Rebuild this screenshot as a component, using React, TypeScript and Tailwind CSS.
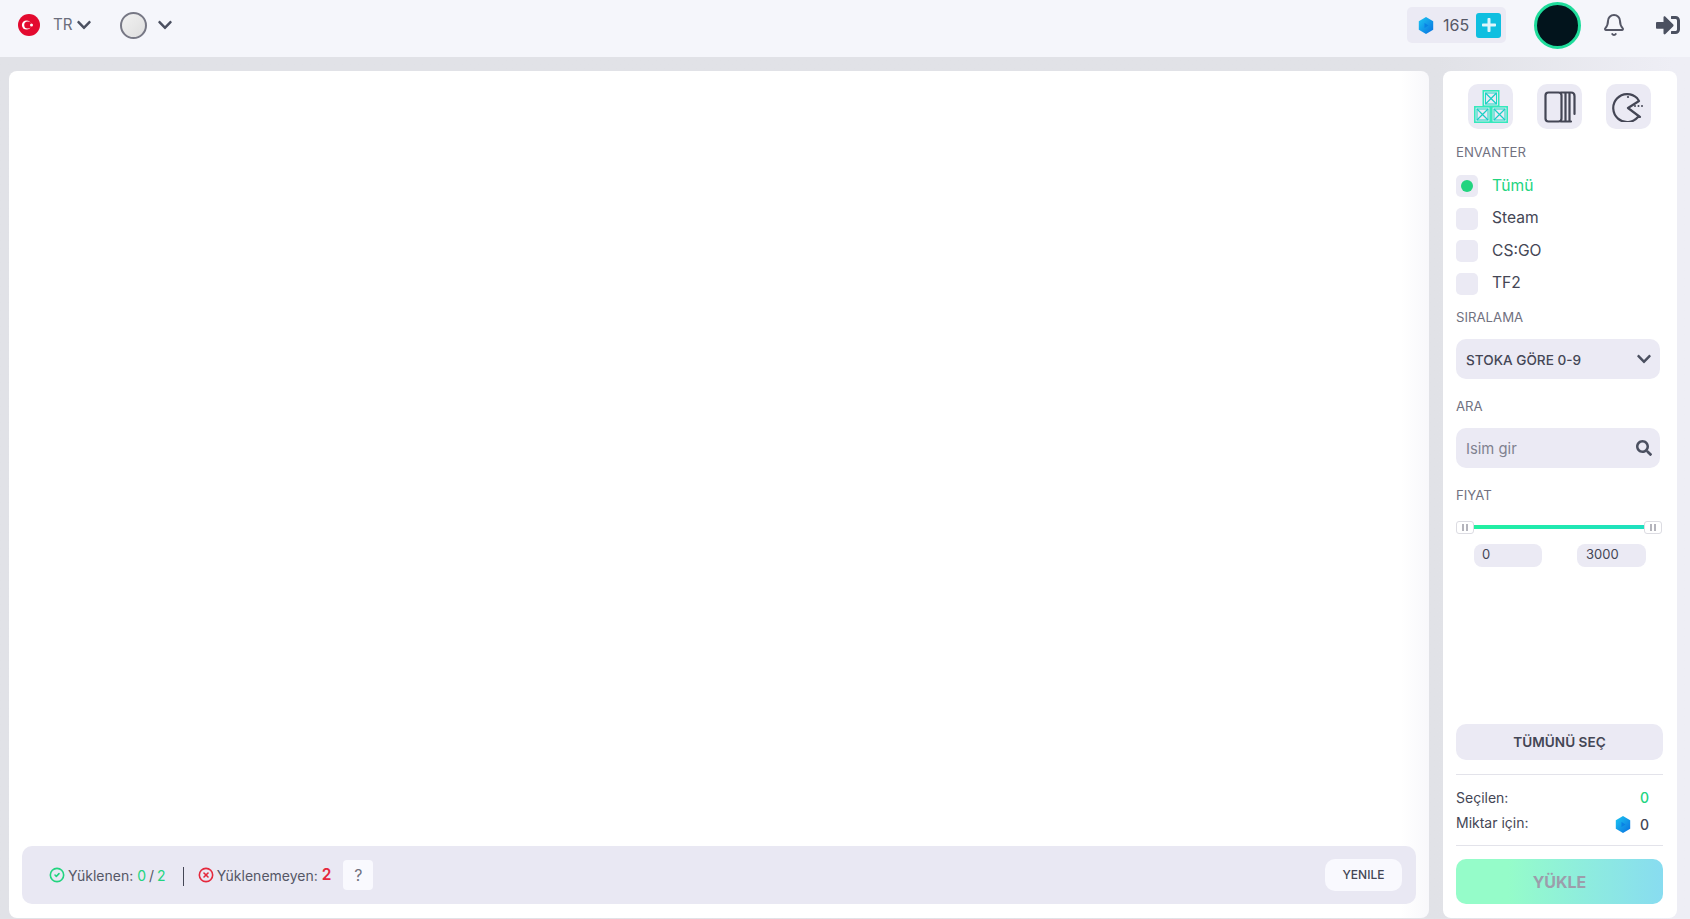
import { Bell, CheckCircle2, XCircle } from "lucide-react";
import { FaChevronDown, FaSignInAlt, FaPlus, FaSearch } from "react-icons/fa";

function Hex({ id }: { id: string }) {
  return (
    <svg width="16" height="17" viewBox="0 0 16 17" className="shrink-0">
      <defs>
        <linearGradient id={id} x1="0" y1="0" x2="1" y2="1">
          <stop offset="0" stopColor="#1cc8f2" />
          <stop offset="1" stopColor="#0a6fe0" />
        </linearGradient>
      </defs>
      <path d="M8 0 15.2 4.2V12.8L8 17 0.8 12.8V4.2Z" fill={`url(#${id})`} />
      <path d="M6.5 6 10.5 8.5 6.5 11Z" fill="#0a82e4" />
    </svg>
  );
}

function Crate({ x, y, s }: { x: number; y: number; s: number }) {
  return (
    <g>
      <rect x={x + 0.8} y={y + 0.8} width={s - 1.6} height={s - 1.6} fill="none" stroke="#35e8bd" strokeWidth="1.6" />
      <rect x={x + 3} y={y + 3} width={s - 6} height={s - 6} fill="none" stroke="#1fd6c6" strokeWidth="1" />
      <path d={`M${x + 3} ${y + 3} L${x + s - 3} ${y + s - 3} M${x + s - 3} ${y + 3} L${x + 3} ${y + s - 3}`} stroke="#19cfc4" strokeWidth="1.2" />
    </g>
  );
}

function Radio({ label, active }: { label: string; active?: boolean }) {
  return (
    <div className="flex items-center h-[22px]">
      <div className="w-[22px] h-[22px] rounded-[5px] bg-[#ebeaf4] flex items-center justify-center">
        {active && <div className="w-[12px] h-[12px] rounded-full bg-[#22d47f]" />}
      </div>
      <span className={`ml-[14px] -mt-[1px] text-[15.6px] ${active ? "text-[#22d47f]" : "text-[#444655]"}`}>{label}</span>
    </div>
  );
}

function Label({ children, className = "" }: { children: React.ReactNode; className?: string }) {
  return <div className={`text-[13.2px] leading-[18px] text-[#71717f] ${className}`}>{children}</div>;
}

function Handle() {
  return (
    <div className="w-[18px] h-[13px] bg-white border border-[#dcdce2] rounded-[3px] flex items-center justify-center gap-[2px] shrink-0">
      <div className="w-[2px] h-[7px] bg-[#b4b4bc]" />
      <div className="w-[2px] h-[7px] bg-[#b4b4bc]" />
    </div>
  );
}

export default function App() {
  return (
    <div className="h-[919px] w-[1690px] overflow-hidden flex flex-col bg-gradient-to-r from-[#e1e2e7] from-85% to-[#eeeef5] to-99% font-['Inter','Liberation_Sans',sans-serif] text-[#444655]">
      <header className="h-[57px] shrink-0 bg-[#f5f6fb] flex items-center pl-[18px] pr-[10px] pb-[7px]">
        <svg width="22" height="22" viewBox="0 0 22 22" className="shrink-0">
          <circle cx="11" cy="11" r="11" fill="#e30a2f" />
          <circle cx="8.5" cy="11" r="4.6" fill="#fff" />
          <circle cx="9.8" cy="11" r="3.6" fill="#e30a2f" />
          <circle cx="13.5" cy="11" r="1.5" fill="#fff" />
        </svg>
        <span className="ml-[13px] text-[15.2px] text-[#6b6e7d]">TR</span>
        <FaChevronDown className="ml-[3px] text-[#4b5060] w-[16px] h-[16px]" />
        <div className="ml-[28px] w-[27px] h-[27px] rounded-full border-2 border-[#777885] bg-gradient-to-br from-[#f2f2f2] to-[#dedede]" />
        <FaChevronDown className="ml-[10px] text-[#4b5060] w-[16px] h-[16px]" />
        <div className="ml-auto flex items-center">
          <div className="w-[99px] h-[36px] rounded-[5px] bg-[#ebeaf4] flex items-center pl-[11px]">
            <Hex id="hx1" />
            <span className="ml-[9px] text-[16px] text-[#555766]">165</span>
            <div className="ml-[7px] w-[25px] h-[25px] rounded-[3px] bg-[#0fbfe0] flex items-center justify-center">
              <FaPlus className="text-[#dff6fb] w-[16px] h-[16px]" />
            </div>
          </div>
          <div className="ml-[28px] w-[47px] h-[47px] rounded-full bg-[#02141c] border-[3px] border-[#1fdc9b]" />
          <Bell className="ml-[21px] w-[24px] h-[24px] text-[#555766]" strokeWidth={2} />
          <FaSignInAlt className="ml-[30px] w-[24px] h-[24px] text-[#4b5060]" />
        </div>
      </header>

      <main className="flex-1 min-h-0 flex gap-[14px] pl-[9px] pr-[13px] pt-[14px] pb-px">
        <section className="w-[1420px] bg-gradient-to-r from-white from-98% to-[#f8f8fb] rounded-[8px] flex flex-col justify-end px-[13px] pb-[14px]">
          <div className="h-[58px] rounded-[10px] bg-[#e9e8f3] flex items-center pl-[27px] pr-[14px] text-[14px]">
            <CheckCircle2 className="w-[16px] h-[16px] text-[#22d47f]" strokeWidth={2.4} />
            <span className="ml-[3px] text-[#555766]">Yüklenen:</span>
            <span className="ml-[4px] text-[#22d47f]">0</span>
            <span className="ml-[3px] text-[#555766]">/</span>
            <span className="ml-[3px] text-[#22d47f]">2</span>
            <div className="ml-[17px] mt-[2px] w-px h-[19px] bg-[#444655]" />
            <XCircle className="ml-[14px] w-[16px] h-[16px] text-[#e5283c]" strokeWidth={2.4} />
            <span className="ml-[3px] text-[#555766]">Yüklenemeyen:</span>
            <span className="ml-[4px] text-[15.5px] font-semibold text-[#e5283c]">2</span>
            <div className="ml-[12px] w-[30px] h-[30px] rounded-[4px] bg-[#f9f9fe] flex items-center justify-center text-[16px] text-[#71717f]">?</div>
            <button className="ml-auto w-[77px] h-[32px] rounded-[10px] bg-[#f9f9fe] text-[12px] font-medium text-[#444655]">YENILE</button>
          </div>
        </section>

        <aside className="w-[234px] bg-white rounded-[8px] flex flex-col pt-[13px] pl-[13px] pr-[14px] pb-[14px]">
          <div className="flex justify-between pl-[12px] pr-[12px]">
            <div className="w-[45px] h-[45px] rounded-[10px] bg-[#ebeaf4] flex items-center justify-center">
              <svg width="34" height="33" viewBox="0 0 34 33">
                <Crate x={8.5} y={0} s={17} />
                <Crate x={0} y={16} s={17} />
                <Crate x={17} y={16} s={17} />
              </svg>
            </div>
            <div className="w-[45px] h-[45px] rounded-[10px] bg-[#ebeaf4] flex items-center justify-center">
              <svg width="32" height="32" viewBox="0 0 32 32" fill="none" stroke="#444655" strokeWidth="2.2" strokeLinecap="round">
                <rect x="1.5" y="1.5" width="16" height="29" rx="3" />
                <path d="M21.5 1.5V30.5M25.5 1.5V30.5M17 1.5H27Q30.5 1.5 30.5 5V23M17 30.5H27" />
              </svg>
            </div>
            <div className="w-[45px] h-[45px] rounded-[10px] bg-[#ebeaf4] flex items-center justify-center">
              <svg width="33" height="31" viewBox="0 0 33 31" fill="none" stroke="#444655" strokeWidth="2.2" strokeLinecap="round" strokeLinejoin="round">
                <path d="M27 10 L25 7 A14 14 0 1 0 26 26 L28 26 L16 17 Z" />
                <circle cx="16" cy="6" r="1.1" fill="#444655" stroke="none" />
                <circle cx="23" cy="15" r="1" fill="#444655" stroke="none" />
                <circle cx="26.5" cy="15" r="1" fill="#444655" stroke="none" />
                <circle cx="30" cy="15" r="1" fill="#444655" stroke="none" />
              </svg>
            </div>
          </div>

          <Label className="mt-[14px]">ENVANTER</Label>
          <div className="mt-[14px] flex flex-col gap-[10.5px]">
            <Radio label="Tümü" active />
            <Radio label="Steam" />
            <Radio label="CS:GO" />
            <Radio label="TF2" />
          </div>

          <Label className="mt-[13px]">SIRALAMA</Label>
          <div className="mt-[13px] w-[204px] h-[40px] rounded-[10px] bg-[#ebeaf4] flex items-center justify-between pl-[10px] pr-[8px] text-[13.6px] font-medium text-[#444655]">
            <span className="mt-[4px]">STOKA GÖRE 0-9</span>
            <FaChevronDown className="w-[16px] h-[16px] text-[#4b5060]" />
          </div>

          <Label className="mt-[18px]">ARA</Label>
          <div className="mt-[13px] w-[204px] h-[40px] rounded-[10px] bg-[#ebeaf4] flex items-center justify-between pl-[10px] pr-[8px] text-[14.8px] text-[#80818f]">
            <span className="mt-[4px]">Isim gir</span>
            <FaSearch className="w-[16px] h-[16px] text-[#4b5060]" />
          </div>

          <Label className="mt-[18px]">FIYAT</Label>
          <div className="mt-[17px] w-[206px] flex items-center">
            <Handle />
            <div className="flex-1 h-[4px] bg-gradient-to-r from-[#22f0a0] to-[#1fe0c0]" />
            <Handle />
          </div>
          <div className="mt-[10px] flex pl-[18px] gap-[35px]">
            <div className="w-[68px] h-[23px] rounded-[8px] bg-[#ebeaf4] pl-[8px] flex items-center text-[13px] text-[#444655]">0</div>
            <div className="w-[69px] h-[23px] rounded-[8px] bg-[#ebeaf4] pl-[9px] flex items-center text-[13px] text-[#444655]">3000</div>
          </div>

          <button className="mt-auto h-[36px] rounded-[10px] bg-[#ebeaf4] text-[13.6px] font-semibold text-[#444655]">TÜMÜNÜ SEÇ</button>
          <div className="mt-[14px] h-px bg-[#e3e3ea]" />
          <div className="mt-[13px] flex items-center justify-between h-[18px] text-[14px] pr-[14px]">
            <span>Seçilen:</span>
            <span className="font-medium text-[#22d47f]">0</span>
          </div>
          <div className="mt-[8px] flex items-center h-[18px] text-[14px] pr-[14px]">
            <span className="-mt-[2px]">Miktar için:</span>
            <span className="ml-auto flex items-center gap-[9px] mt-[2px]">
              <Hex id="hx2" />
              <span className="font-medium">0</span>
            </span>
          </div>
          <div className="mt-[13px] h-px bg-[#e3e3ea]" />
          <button className="mt-[13px] h-[45px] rounded-[10px] bg-gradient-to-r from-[#95fcc9] from-25% to-[#88dcf0] text-[16px] font-bold text-[#9c9dab]">YÜKLE</button>
        </aside>
      </main>
    </div>
  );
}
